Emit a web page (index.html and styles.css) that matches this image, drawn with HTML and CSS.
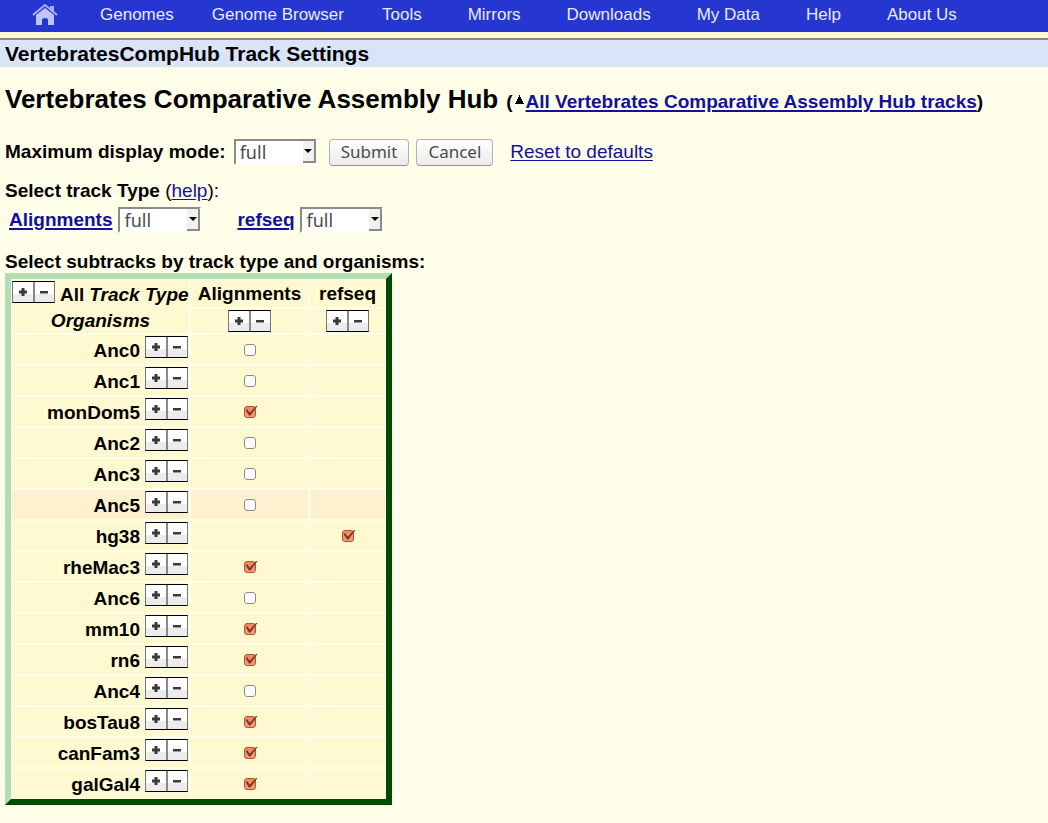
FILE: index.html
```html
<!DOCTYPE html>
<html lang="en">
<head>
    <meta charset="UTF-8">
    <meta name="viewport" content="width=device-width, initial-scale=1.0">
    <title>VertebratesCompHub Track Settings</title>
    <link rel="stylesheet" href="styles.css">
    <script src="script.js" defer></script>
</head>
<body>
    <svg class="defs" aria-hidden="true">
        <symbol id="plus" viewBox="0 0 8 8"><path d="M2.5 0h3v2.5H8v3H5.5V8h-3V5.5H0v-3h2.5z"/></symbol>
        <symbol id="minus" viewBox="0 0 8 8"><path d="M0 3h8v2.5H0z"/></symbol>
        <symbol id="arrow" viewBox="0 0 8 4"><path d="M0 0h8L4 4z"/></symbol>
    </svg>
    <nav class="menu">
        <a class="home" href="#" aria-label="Home">
            <svg width="26" height="22" viewBox="0 0 26 22">
                <path d="M1 11L13 1l12 10" fill="none" stroke="#a9b0ef" stroke-width="2"/>
                <path d="M18 2h4v7l-4-3z" fill="#a9b0ef"/>
                <path d="M13 4l9 7v10h-6v-5q0-2-3-2t-3 2v5H4V11z" fill="#c0c5f5"/>
            </svg>
        </a>
        <a class="tight" href="#">Genomes</a>
        <a class="tight" href="#">Genome Browser</a>
        <a href="#">Tools</a>
        <a href="#">Mirrors</a>
        <a href="#">Downloads</a>
        <a href="#">My Data</a>
        <a href="#">Help</a>
        <a href="#">About Us</a>
    </nav>
    <h1 class="section">VertebratesCompHub Track Settings</h1>
    <form class="content">
        <div class="heading">
            <h2>Vertebrates Comparative Assembly Hub</h2>
            <b>(<svg class="up" width="9" height="10" viewBox="0 0 9 10"><path d="M4 0h1v2h1v2h1v2h1v2h1v1H0V8h1V6h1V4h1V2h1z"/></svg><a href="#">All Vertebrates Comparative Assembly Hub tracks</a>)</b>
        </div>
        <div class="display">
            <label for="mode">Maximum display mode:</label>
            <span class="select">
                <select id="mode"><option>hide</option><option>dense</option><option selected>full</option></select>
                <span class="drop"><svg width="8" height="4"><use href="#arrow"/></svg></span>
            </span>
            <button class="btn submit" type="submit">Submit</button>
            <button class="btn" type="button">Cancel</button>
            <a class="reset" href="#">Reset to defaults</a>
        </div>
        <div class="line"><b>Select track Type</b> (<a href="#">help</a>):</div>
        <div class="types">
            <a id="lab1" href="#">Alignments</a>
            <span class="select">
                <select aria-labelledby="lab1"><option>hide</option><option>dense</option><option selected>full</option></select>
                <span class="drop"><svg width="8" height="4"><use href="#arrow"/></svg></span>
            </span>
            <a id="lab2" class="second" href="#">refseq</a>
            <span class="select">
                <select aria-labelledby="lab2"><option>hide</option><option>dense</option><option selected>full</option></select>
                <span class="drop"><svg width="8" height="4"><use href="#arrow"/></svg></span>
            </span>
        </div>
        <div class="line"><b>Select subtracks by track type and organisms:</b></div>
        <table class="matrix">
            <thead>
                <tr class="names">
                    <th class="corner" rowspan="2">
                        <div class="all"><span class="pm"></span><span>All</span><i>Track Type</i></div>
                        <i class="org">Organisms</i>
                    </th>
                    <th class="ali">Alignments</th>
                    <th class="ref">refseq</th>
                </tr>
                <tr class="tools">
                    <td><span class="pm"></span></td>
                    <td><span class="pm"></span></td>
                </tr>
            </thead>
            <tbody id="rows"></tbody>
        </table>
    </form>
</body>
</html>
```
FILE: styles.css
```css
body {
    margin: 0;
    background: #fffee8;
    color: #000;
    font: 19px/22px "Liberation Sans", Arial, sans-serif;
}
a {
    color: #11119e;
    text-underline-offset: 2px;
}
.defs {
    position: absolute;
    width: 0;
    height: 0;
}

/* top menu */
.menu {
    display: flex;
    align-items: center;
    height: 32px;
    padding-left: 32px;
    background: #2636d1;
    border-bottom: 6px solid #fff7d2;
}
.menu a {
    color: #e9ebfb;
    font-size: 17px;
    line-height: 28px;
    padding-bottom: 2px;
    margin-right: 46px;
    text-decoration: none;
    white-space: nowrap;
}
.menu .home {
    margin-right: 42px;
}
.menu .tight {
    margin-right: 38px;
}
.menu svg {
    display: block;
}
.section {
    margin: 0;
    padding: 1px 5px 0;
    border-top: 2px solid #888;
    background: #d9e4f8;
    font-size: 21px;
    line-height: 26px;
}

/* settings */
.content {
    padding: 16px 5px;
}
.heading {
    display: flex;
    align-items: baseline;
    gap: 8px;
    line-height: 32px;
}
.heading h2 {
    margin: 0;
    font-size: 26px;
}
.up {
    margin: 0 2px 3px;
}
.display, .types {
    display: flex;
    align-items: center;
    height: 26px;
}
.display {
    margin: 21px 0 15px;
}
.display label {
    font-weight: bold;
    margin-right: 8px;
}
.select {
    position: relative;
    display: block;
}
.select select {
    appearance: none;
    display: block;
    width: 83px;
    height: 26px;
    padding: 0 4px;
    border: 2px solid;
    border-color: #8a8a86 #fff #fff #8a8a86;
    border-radius: 0;
    background: #fff;
    color: #4c4c4c;
    font: 18px/22px "Noto Sans", sans-serif;
}
.drop {
    position: absolute;
    top: 2px;
    right: 1px;
    width: 11px;
    height: 20px;
    display: grid;
    place-items: center;
    background: #f0f0ee;
    border-right: 2px solid #8a8a86;
    border-bottom: 2px solid #8a8a86;
    pointer-events: none;
}
.btn {
    height: 27px;
    padding: 0 11px;
    margin-right: 7px;
    border: 1px solid #b5b3ae;
    border-bottom-color: #969490;
    border-radius: 4px;
    background: linear-gradient(#fff, #ebebeb);
    color: #4c4c4c;
    font: 17px/22px "Noto Sans", sans-serif;
}
.submit {
    margin-left: 12px;
}
.reset {
    margin-left: 10px;
}
.types {
    padding-left: 4px;
    margin: 5px 0 18px;
    gap: 6px;
    font-weight: bold;
}
.types .second {
    margin-left: 30px;
}
.types a, .heading a {
    text-decoration-thickness: 2px;
}

/* subtrack matrix */
.matrix {
    border: 6px solid;
    border-color: #b3deb3 #004b00 #004b00 #b3deb3;
    border-spacing: 0;
    background: #fff9d2;
}
.matrix th, .matrix td {
    box-sizing: border-box;
    height: 31px;
    padding: 0;
    border: 1px solid #fffee8;
    text-align: center;
    white-space: nowrap;
}
.matrix .names th {
    height: 29px;
}
.matrix .tools td {
    height: 26px;
}
.matrix .corner {
    width: 179px;
    vertical-align: top;
}
.matrix .ali {
    width: 119px;
}
.matrix .ref {
    width: 77px;
}
.all {
    display: flex;
    gap: 5px;
    line-height: 30px;
}
.org {
    display: block;
    line-height: 22px;
}
.name {
    display: flex;
    justify-content: flex-end;
    gap: 5px;
    padding-right: 1px;
    line-height: 31px;
    height: 29px;
}
.name .pm {
    margin-top: 1px;
}
.matrix .hot th, .matrix .hot td {
    background: #fff1cf;
}
.pm {
    display: inline-flex;
    box-sizing: border-box;
    width: 43px;
    height: 22px;
    border: 1px solid;
    border-color: #000 #777;
    vertical-align: middle;
}
.all .pm {
    margin-top: 1px;
}
.pm button {
    flex: 1;
    display: grid;
    place-items: center;
    padding: 0;
    border: 0;
    background: linear-gradient(#fff 60%, #ececec 60%);
    color: #333;
}
.pm button + button {
    border-left: 2px solid #888;
}
.pm svg {
    display: block;
    fill: #3a3a3a;
}
.matrix input {
    appearance: none;
    display: block;
    position: relative;
    box-sizing: border-box;
    width: 12px;
    height: 12px;
    margin: 0 auto;
    border: 1px solid #8f8c88;
    border-radius: 3px;
    background: #fff;
}
.matrix input:checked {
    border-color: #b9512f;
    background: linear-gradient(#f4845c, #f59a78);
}
.matrix input:checked::after {
    content: "";
    position: absolute;
    left: 1px;
    top: -1px;
    width: 12px;
    height: 10px;
    background: #6b3a28;
    clip-path: polygon(0 45%, 14% 38%, 36% 72%, 92% 0, 100% 4%, 40% 100%, 30% 100%);
}
```
FILE: script.js
```js
// organism name, alignments box, refseq box (null = no box)
var organisms = [
    ["Anc0", false, null],
    ["Anc1", false, null],
    ["monDom5", true, null],
    ["Anc2", false, null],
    ["Anc3", false, null],
    ["Anc5", false, null],
    ["hg38", null, true],
    ["rheMac3", true, null],
    ["Anc6", false, null],
    ["mm10", true, null],
    ["rn6", true, null],
    ["Anc4", false, null],
    ["bosTau8", true, null],
    ["canFam3", true, null],
    ["galGal4", true, null]
];

function box(name, type, on) {
    if (on === null) return "<td></td>";
    return '<td><input type="checkbox" aria-label="' + name + " " + type + '"' + (on ? " checked" : "") + "></td>";
}

document.getElementById("rows").innerHTML = organisms.map(function (o) {
    return "<tr" + (o[0] == "Anc5" ? ' class="hot"' : "") + '><th><div class="name">' + o[0] +
        '<span class="pm"></span></div></th>' + box(o[0], "Alignments", o[1]) + box(o[0], "refseq", o[2]) + "</tr>";
}).join("");

// plus and minus button pairs
document.querySelectorAll(".pm").forEach(function (pm) {
    pm.innerHTML = '<button type="button" aria-label="Select all"><svg width="8" height="8"><use href="#plus"/></svg></button>' +
        '<button type="button" aria-label="Clear all"><svg width="8" height="8"><use href="#minus"/></svg></button>';
    pm.onclick = function (e) {
        var b = e.target.closest("button");
        if (!b) return;
        var on = b == pm.firstChild;
        var cell = pm.closest("td, th");
        var col = cell.closest(".tools") ? cell.cellIndex + 2 : 0;
        var where = cell.closest("tbody") ? cell.parentNode : document.getElementById("rows");
        where.querySelectorAll(col ? "td:nth-child(" + col + ") input" : "input").forEach(function (input) {
            input.checked = on;
        });
    };
});
```
